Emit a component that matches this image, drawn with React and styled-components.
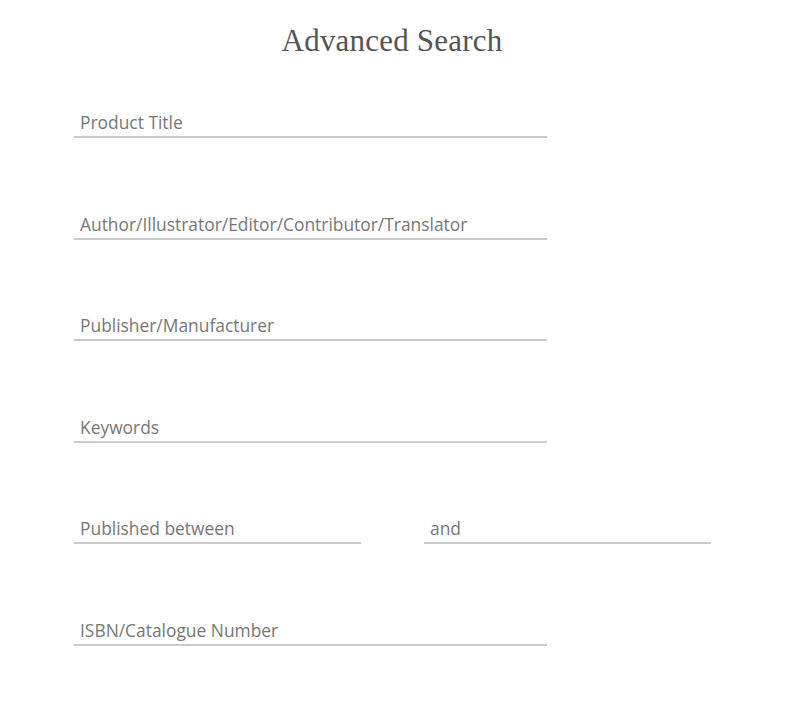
import styled, { createGlobalStyle } from "styled-components";

const GlobalStyle = createGlobalStyle`
  body {
    margin: 0;
    background: #fff;
    font-family: "Open Sans", "Liberation Sans", sans-serif;
  }
`;

const fields = [
  "Product Title",
  "Author/Illustrator/Editor/Contributor/Translator",
  "Publisher/Manufacturer",
  "Keywords",
];

export default function App() {
  return (
    <Page>
      <GlobalStyle />
      <Title>Advanced Search</Title>
      <Form>
        {fields.map((f) => (
          <Field key={f} placeholder={f} />
        ))}
        <Pair>
          <Field $half placeholder="Published between" />
          <Field $half placeholder="and" />
        </Pair>
        <Field placeholder="ISBN/Catalogue Number" />
      </Form>
    </Page>
  );
}

const Page = styled.div`
  width: 790px;
  height: 708px;
  padding-top: 21px;
  box-sizing: border-box;
`;

const Title = styled.h1`
  margin: 0;
  padding-right: 6px;
  text-align: center;
  font-family: "Liberation Serif", "DejaVu Serif", serif;
  font-weight: normal;
  font-size: 31px;
  line-height: 40px;
  color: #555;
  letter-spacing: 0.2px;
`;

const Form = styled.form`
  display: grid;
  row-gap: 71.5px;
  margin-top: 47px;
  padding-left: 74px;
`;

const Pair = styled.div`
  display: flex;
  gap: 63px;
`;

const Field = styled.input`
  width: ${(p) => (p.$half ? "287px" : "473px")};
  height: 30px;
  box-sizing: border-box;
  border: none;
  border-bottom: 2px solid #cacaca;
  padding: 0 6px;
  font-family: "Open Sans", "Liberation Sans", sans-serif;
  font-size: 17.4px;
  color: #555;
  background: transparent;
  outline: none;

  &::placeholder {
    color: #777;
  }
`;
